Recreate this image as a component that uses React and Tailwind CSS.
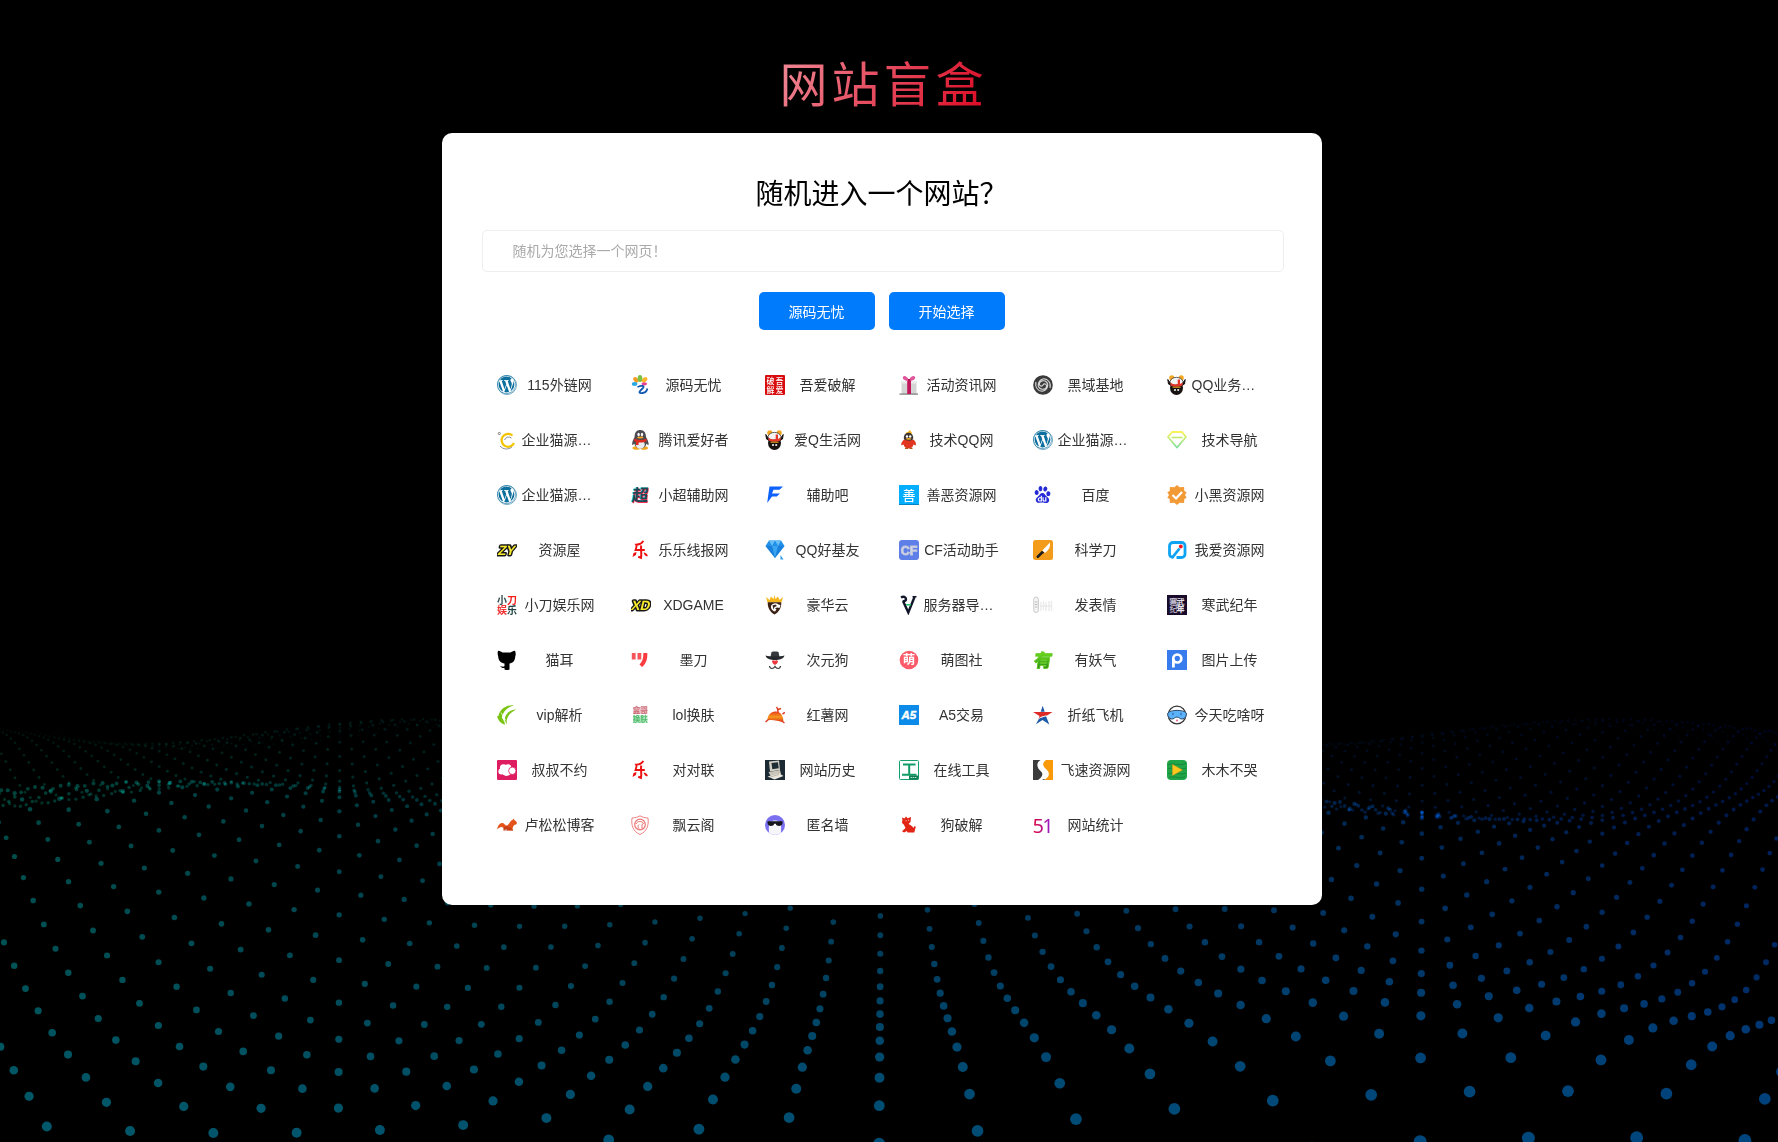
import { useEffect, useRef } from "react";
import { FaWordpress } from "react-icons/fa";
import { SiBaidu } from "react-icons/si";

const FONT = "font-['Liberation_Sans','Noto_Sans_CJK_SC',sans-serif]";

/* ---------- perspective dot field, frozen at one moment ---------- */
const FIELD = { cx: 881.5, cy: 617.5, focal: 1082.5, width: 570.24, depth: 400, height: 3, step: 5, phase: 4.828 };

function DotWave() {
  const ref = useRef(null);
  useEffect(() => {
    const ctx = ref.current.getContext("2d");
    const { cx, cy, focal, width, depth, height, step, phase } = FIELD;
    ctx.clearRect(0, 0, 1778, 1142);
    ctx.globalCompositeOperation = "lighter";
    for (let x = 0; x < width; x += step) {
      for (let z = 0; z < depth; z += step) {
        const px = x - width / 2;
        const pz = z - depth / 2;
        const w = 100 - pz;
        if (w < 30) continue;
        const py = -30 + height * (Math.cos((px / width) * Math.PI * 8 + phase) + Math.sin((pz / depth) * Math.PI * 8 + phase));
        const sx = cx + (focal * px) / w;
        const sy = cy - (focal * py) / w;
        const g = Math.round((1 - x / width) * 255);
        const b = Math.round((0.5 + (x / width) * 0.5) * 255);
        ctx.fillStyle = `rgba(0,${g},${b},${z / depth})`;
        ctx.beginPath();
        ctx.arc(sx, sy, 322 / w, 0, Math.PI * 2);
        ctx.fill();
      }
    }
  }, []);
  return <canvas ref={ref} width={1778} height={1142} className="absolute inset-0 h-[1142px] w-[1778px]" />;
}

/* ---------- icons, all on a 20x20 grid ---------- */
const Svg = ({ children }) => (
  <svg viewBox="0 0 20 20" className="h-5 w-5 shrink-0 font-['Noto_Sans_CJK_SC',sans-serif]">{children}</svg>
);
const T = ({ x = 10, y = 16, s = 16, f = "#fff", w = 700, children, ...r }) => (
  <text x={x} y={y} fontSize={s} fill={f} fontWeight={w} textAnchor="middle" {...r}>{children}</text>
);

const Wordpress = () => (
  <span className="flex h-5 w-5 shrink-0 items-center justify-center rounded-full border border-[#6fa8c4]">
    <FaWordpress className="h-[19px] w-[19px] shrink-0 text-[#0d6f9e]" />
  </span>
);
const Flower = () => (
  <Svg>
    <ellipse cx="4.800" cy="4.800" rx="2.200" ry="3" fill="#f59a23" transform="rotate(-35 4.800 4.800)" />
    <ellipse cx="9" cy="3.600" rx="2.400" ry="3.500" fill="#7ac143" />
    <ellipse cx="13.600" cy="4.800" rx="2.200" ry="3.200" fill="#f7b52c" transform="rotate(45 13.600 4.800)" />
    <ellipse cx="3.600" cy="9" rx="2.800" ry="1.900" fill="#29a9e1" />
    <ellipse cx="13.300" cy="8.800" rx="2.800" ry="1.600" fill="#e84393" />
    <path d="M6.500 12c4-2 8-1.200 5 1.500s-5 5 0 4.500 4-3 5-4.500" fill="none" stroke="#1459b0" strokeWidth="1.800" />
  </Svg>
);
const Seal = () => (
  <Svg>
    <rect width="20" height="20" rx="1" fill="#d80c0c" />
    <T x={5.4} y={8.800} s={8} w={500}>破</T><T x={14.600} y={8.800} s={8} w={500}>吾</T>
    <T x={5.4} y={17.800} s={8} w={500}>解</T><T x={14.600} y={17.800} s={8} w={500}>爱</T>
  </Svg>
);
const Gift = () => (
  <Svg>
    <path d="M2.500 7h15v12h-15z" fill="#d4d4d4" /><path d="M2 6h16v2.500H2z" fill="#ececec" />
    <path d="M.5 18.500h18.500v1.200H.5z" fill="#777" />
    <path d="M8.200 5h3.800v14H8.200z" fill="#c2185b" />
    <path d="M10 6C6 6 3 4 4 2S8 1.500 10 5c1.500-3.500 5-5 6-3S14 6 10 6z" fill="#e0559b" />
    <path d="M9 4h2.200v2.200H9z" fill="#b3134f" />
  </Svg>
);
const Swirl = () => (
  <Svg>
    <circle cx="10" cy="10" r="9.800" fill="#3a3a3a" />
    <path d="M10 10c1-2 4-1 3.500 1.500S9 15.500 6.500 13 5.500 5 10 4s8.500 4 7 9M10 10c-1 2-4 1-3.500-1.500S11 4.500 13.500 7s1 8-3.500 9-8.500-4-7-9" fill="none" stroke="#d8d8d8" strokeWidth="1.100" />
  </Svg>
);
const Panda = () => (
  <Svg>
    <circle cx="4.800" cy="2.800" r="2.600" fill="#f5a623" /><circle cx="14.200" cy="2.800" r="2.600" fill="#f5a623" />
    <ellipse cx="9.500" cy="13" rx="6.500" ry="7" fill="#17110f" />
    <path d="M.8 4.500L5 11l-3.500-2zM18.200 4.500L14 11l3.500-2z" fill="#17110f" stroke="#17110f" />
    <path d="M3 6.500C4.500 1 14.500 1 16 6.500l-1 3.500H4z" fill="#f3f3f3" stroke="#222" strokeWidth=".7" />
    <path d="M3.200 7.500c3 2 5 2.300 7.500 1.500V4.500H13V9l2.800-1.500-.6 3.300c-4 1.400-7.500 1.400-11.400 0z" fill="#e4352b" />
    <circle cx="8" cy="15" r="1.100" fill="#eee" /><circle cx="11.200" cy="15" r="1.100" fill="#eee" />
    <path d="M5.500 12.200h8" stroke="#f2b01e" strokeWidth="1" />
  </Svg>
);
const Crescent = () => (
  <Svg>
    <path d="M15.500 5.500A6.500 6.500 0 1 0 17 13" fill="none" stroke="#f5c400" strokeWidth="2.200" />
    <path d="M14.500 8a4.500 4.500 0 0 0-7 2M3 16c3 3.500 8 4 12 1" fill="none" stroke="#8b8f99" strokeWidth="1" />
    <circle cx="2.300" cy="3.500" r="1.100" fill="none" stroke="#666" strokeWidth=".8" />
  </Svg>
);
const Penguin = () => (
  <Svg>
    <ellipse cx="5.500" cy="18" rx="4" ry="1.800" fill="#f3a51c" /><ellipse cx="13" cy="18" rx="4" ry="1.800" fill="#f3a51c" />
    <path d="M9.300 0c4 0 5.700 3 5.700 7 1.500 3 3 5 2.500 8-.8 0-1.500-.8-2-1.500-.5 3-3 5-6.200 5s-5.500-2-6-5c-.6.8-1.300 1.500-2 1.500C.8 12 2.200 10 3.600 7c0-4 1.700-7 5.700-7z" fill="#4a4a50" />
    <ellipse cx="9.300" cy="14.500" rx="4.500" ry="4.300" fill="#e9edf0" />
    <ellipse cx="7.600" cy="4.600" rx="1.200" ry="1.800" fill="#fff" /><ellipse cx="11" cy="4.600" rx="1.200" ry="1.800" fill="#fff" />
    <ellipse cx="9.300" cy="7.500" rx="3.200" ry="1" fill="#f5a623" />
    <path d="M3.500 8.500c4 2 8 2 11.700 0l.6 2.500c-4 2-9 2-12.800 0zM5 11h2.600v4H5z" fill="#dc2a20" />
  </Svg>
);
const FirePenguin = () => (
  <Svg>
    <path d="M6.500 4c0-1.500 1.500-2 3-2.500L11 0l2 3-1 2z" fill="#f8b31c" />
    <ellipse cx="9.500" cy="7.500" rx="4.700" ry="4.700" fill="#3a3434" />
    <path d="M5 9.500c3 1.500 7 1.500 9.500 0 2 2 3 4 2.200 6l-2.200-1c-.5 2.500-2.500 4-4.900 4s-4.600-1.500-5-4l-2.200 1C1.800 13.500 3 11.500 5 9.500z" fill="#e2351f" />
    <circle cx="8" cy="6.500" r="1.200" fill="#fff" /><circle cx="11.200" cy="6.500" r="1.200" fill="#fff" />
    <ellipse cx="9.600" cy="8.800" rx="2.700" ry=".9" fill="#f5b023" />
    <path d="M6 18.300h3M10.500 18.300h3" stroke="#b5561c" strokeWidth="1.200" />
  </Svg>
);
const GemOutline = () => (
  <Svg>
    <defs><linearGradient id="gem" x2="0" y2="1"><stop stopColor="#fbf25a" /><stop offset="1" stopColor="#7fe0a0" /></linearGradient></defs>
    <path d="M5 2h10l4 5-9 10.500L1 7z" fill="none" stroke="url(#gem)" strokeWidth="1.900" strokeLinejoin="round" />
    <path d="M4.500 7.500h11" stroke="#c3ea6c" strokeWidth="1.600" />
  </Svg>
);
const Chao = () => (
  <Svg>
    <g transform="skewX(-6) translate(.5 0)">
      <T y={15.800} s={16.500} f="#2be0dc" x={9.200}>超</T><T y={16.600} s={16.500} f="#fa2b56" x={10.600}>超</T><T y={16.200} s={16.500} f="#1c4956" x={9.900}>超</T>
    </g>
  </Svg>
);
const Bolt = () => (
  <Svg>
    <path d="M4.500 1.500H18l-3.500 3.300H8.500L7 8.500h8l-3.200 3H7L2.200 18l1-7.500z" fill="#0d62fe" />
  </Svg>
);
const Shan = () => (
  <Svg><rect width="20" height="20" fill="#04aeff" /><path d="M0 19h20v1H0z" fill="#0583c4" /><T y={14.800} s={13} w={500}>善</T></Svg>
);
const Baidu = () => (
  <span className="flex h-5 w-5 shrink-0 items-center justify-center"><SiBaidu className="h-[17px] w-[17px] text-[#2529d8]" /></span>
);
const Badge = () => (
  <Svg>
    <path d="M10 0l2.600 2.200 4.500-.3.200 4 2.400 1.400L18 10l1.700 2.700-2.400 1.400-.2 4-4.500-.3L10 20l-2.600-2.200-4.500.3-.2-4L.3 12.700 2 10 .3 7.300l2.400-1.400.2-4 4.500.3z" fill="#f29a35" />
    <path d="M5.500 10l3.500 3.500L15 7" fill="none" stroke="#fff" strokeWidth="2.200" />
  </Svg>
);
const Slanted = ({ text }) => (
  <Svg>
    <g transform="skewX(-14) translate(2.500 0)" fontFamily="Liberation Sans">
      <T y={15} s={13.500} f="#f7ea2c" stroke="#171717" strokeWidth="3" paintOrder="stroke" strokeLinejoin="round">{text}</T>
    </g>
  </Svg>
);
const Le = () => (
  <Svg>
    <path d="M12.300.8C11 3.500 8 4.500 5.200 4.600c1 1.500-.2 3.400-.7 5.400h9.300" fill="none" stroke="#ee1111" strokeWidth="1.900" />
    <path d="M10.200 5.500c-.6 4 .6 8-.2 12.300l-2.800-1" fill="none" stroke="#ee1111" strokeWidth="2" />
    <path d="M5.500 12l-.5 3-3.500 2 1-4zM12.500 12.500c2 0 4 1.500 4.300 3.500-2 .8-3.300-1-4.300-3.500z" fill="#ee1111" />
  </Svg>
);
const Diamond = () => (
  <Svg>
    <path d="M4 .5h12l3.500 5.500L10 18 .5 6z" fill="#1f8fe8" /><path d="M4 .5L7 6l3-5.500L13 6l3-5.500z" fill="#67bdf5" />
    <path d="M.5 6h19L10 18z" fill="#1674d4" opacity=".6" /><path d="M7 6h6l-3 12z" fill="#3aa5f0" />
    <path d="M15.500 15l3 4.500h-3z" fill="#2b9ae9" />
  </Svg>
);
const Cf = () => (
  <Svg><rect width="20" height="20" rx="3" fill="#5f7fe8" /><g fontFamily="Liberation Sans"><T y={14.500} s={12.500} f="#d3d6e6" stroke="#c3c8de" strokeWidth=".9">CF</T></g></Svg>
);
const Knife = () => (
  <Svg>
    <rect width="20" height="20" rx="2.500" fill="#f39c1c" />
    <path d="M17 2.500c.5 4.500-1 7-5 10.500L9.300 10.500z" fill="#fff" /><path d="M9 10.800l2.400 2-2 1.200-3.700 3.800c-1.200.8-2.800-.3-2-1.800z" fill="#1e1e1e" />
  </Svg>
);
const Love = () => (
  <Svg>
    <path d="M8 2.500H6A3.500 3.500 0 0 0 2.500 6v8A3.500 3.500 0 0 0 5.500 17.300L12.500 8.500M8 2.500h6.500A3.500 3.500 0 0 1 18 6v8a3.500 3.500 0 0 1-3.500 3.500H9.500" fill="none" stroke="#0fa4f3" strokeWidth="2.800" />
    <circle cx="13.800" cy="6.500" r="1.900" fill="#f3121d" />
  </Svg>
);
const Xiaodao = () => (
  <Svg>
    <T x={5} y={8.800} s={10} f="#2f4a4a">小</T><T x={15} y={8.800} s={10} f="#f02222">刀</T>
    <T x={5} y={18.800} s={10} f="#f03434">娱</T><T x={15} y={18.800} s={10} f="#1f4141">乐</T>
  </Svg>
);
const Lion = () => (
  <Svg>
    <path d="M1 2l3.500 3L6 1.500 8.500 4 9.500 0l1 4L13 1.500 14.500 5 18 2l-1.500 5.500h-14z" fill="#f5b51d" />
    <path d="M2.800 7.200h13.400c.5 5-2 9.500-6.700 12.300-4.700-2.800-7.200-7.300-6.700-12.300z" fill="#3b2014" />
    <path d="M6 11c1.500-3 5-3.500 7.500-1.500l2 .5-1 3-2.500-.5-2 1 1.500 1-1.500 2c-2.500-.5-4.500-3-4-5.500z" fill="#fff" />
    <path d="M7.500 10.500l3-1 1.500 1.500-2.500 1-1 2.500z" fill="#3b2014" />
  </Svg>
);
const Vee = () => (
  <Svg>
    <path d="M2 2.500c2.500-1.500 4.800-.5 5 1.500s-2 2.500-2.500 1M4 6l5.300 11.500L15.500 2" fill="none" stroke="#11162a" strokeWidth="2.400" />
    <path d="M7 9.800h5" stroke="#1fc96b" strokeWidth="1.500" /><path d="M13.500 1.700h4" stroke="#11162a" strokeWidth="1.500" />
  </Svg>
);
const Face = () => (
  <Svg>
    <rect x=".8" y="2" width="4.600" height="15.500" rx="2.300" fill="#f5f5f5" stroke="#c9c9c9" />
    <path d="M2 7h2.400M2 9.500h2.400M2 12h2.400" stroke="#aaa" strokeWidth=".8" />
    <path d="M8 7v9M10.500 6v9M13 7v9M16 6v10M18.500 6v10M7 11h12" stroke="#eaeaea" strokeWidth="1.300" />
  </Svg>
);
const Hanwu = () => (
  <Svg>
    <rect width="20" height="20" fill="#190c2b" />
    <T x={6.500} y={9.500} s={8} f="#b9b3c4">寒</T><T x={13.500} y={9.500} s={8} f="#e3e0e8">武</T>
    <T x={6.500} y={17} s={8} f="#b3acbf">纪</T><T x={13.500} y={17} s={8} f="#f2f0f5">年</T>
    <path d="M2.500 3h7v6h-7zM11 11h6v6h-6z" fill="#d5d0de" opacity=".35" />
  </Svg>
);
const Cat = () => (
  <Svg>
    <path d="M1 .8c2 .2 3.500 1 4.500 1.800h8C14.500 1.800 16 1 18 .8c1 2.500.8 4 .3 5.500C18 11 16 13 12.500 13.500v6c-1 .8-4 .8-5 0V18C5 18.500 4 17 3 16c2 .2 2.500 1.200 4.500.3v-2.800C4 13 1.500 11 1.200 6.500.6 4.500.4 3 1 .8z" fill="#000" />
  </Svg>
);
const Modao = () => (
  <Svg>
    <path d="M.8 3h3.800v6.500H.8zM6.500 3h3.800v6.500H6.500z" fill="#f5555a" /><path d="M12.300 3h4c.3 6-1 10.500-5.300 14l-2.500-2.500c3-3 3.800-6 3.800-11.500z" fill="#fa3c40" />
  </Svg>
);
const Hat = () => (
  <Svg>
    <path d="M5.500 7L6.500 2c2-.6 5-.6 7 0l1 5z" fill="#35383d" />
    <path d="M.5 5.500c5 1.300 14 1.300 19 0-1 3.500-5 4.500-9.500 4.500S1.500 9 .5 5.500z" fill="#25282c" />
    <path d="M7 11c1-1.200 2.300-.8 3 0 .7-.8 2-1.200 3 0 0 2-1.500 3-3 4-1.500-1-3-2-3-4z" fill="#ec3940" />
    <path d="M4.500 16c.5 3.500 4 3 5.500.5 1.500 2.500 5 3 5.500-.5" fill="none" stroke="#333" strokeWidth="1.200" />
  </Svg>
);
const Moe = () => (
  <Svg><circle cx="10" cy="10" r="9.300" fill="#fb5a69" /><T y={14.400} s={12.500}>萌</T></Svg>
);
const You = () => (
  <Svg>
    <defs><linearGradient id="you" x2="0" y2="1"><stop stopColor="#7fe81c" /><stop offset=".45" stopColor="#5cc81c" /><stop offset="1" stopColor="#1f7d1a" /></linearGradient></defs>
    <g transform="skewX(-8) translate(1.500 0)"><T y={16.500} s={18} w={900} f="url(#you)" stroke="#5fc81c" strokeWidth=".7">有</T></g>
  </Svg>
);
const Pp = () => (
  <Svg>
    <rect width="20" height="20" fill="#377bed" />
    <path d="M5 17.500V9h2.800v8.500z" fill="#fff" />
    <circle cx="10.300" cy="8.500" r="4" fill="none" stroke="#fff" strokeWidth="2.700" />
  </Svg>
);
const Leaf = () => (
  <Svg>
    <path d="M17 .3C10-.3 4 3 1.500 10L5 17.500C4 10 7 3.500 17 .3z" fill="#79c411" />
    <path d="M19.500 4.500C13 4.500 7.500 9 7.800 15.500L10 19.800C8.500 13 12.500 7.500 19.500 4.500z" fill="#79c411" />
    <path d="M0 11.500l2.800-1.500c2.500 3 4.500 6 5.400 9.700C4.500 19 1.500 16 0 11.500z" fill="#79c411" />
    <path d="M4 7.500c1.500 3 3 5.500 5 8" fill="none" stroke="#fff" strokeWidth=".7" />
  </Svg>
);
const FourBlock = () => (
  <Svg>
    <path d="M2 2h14.500v7H2z" fill="#e08a94" opacity=".5" /><path d="M2 10.500h14.500V18H2z" fill="#6fd48a" opacity=".5" />
    <g opacity=".85"><T x={5.600} y={8.300} s={7.500} f="#c4606b">盒</T><T x={13} y={8.300} s={7.500} f="#c4606b">哥</T>
    <T x={5.600} y={17} s={7.500} f="#3fb25e">换</T><T x={13} y={17} s={7.500} f="#3fb25e">肤</T></g>
  </Svg>
);
const Yam = () => (
  <Svg>
    <defs><linearGradient id="yam" x2="0" y2="1"><stop stopColor="#e93a1d" /><stop offset=".5" stopColor="#f59b1c" /><stop offset="1" stopColor="#d9251a" /></linearGradient></defs>
    <path d="M2.500 15C2.500 9 7 6.500 11 6.500c4.500 0 7.500 4 7.500 11C13 15.500 8 15 2.500 15z" fill="url(#yam)" />
    <path d="M13 7c0-2 0-3.500-1.500-5M13 4.500l3-1M.5 17l3-2.500M17.500 9L20 7.500M18 17l1.500 1" fill="none" stroke="#dc3a22" strokeWidth="1.500" />
  </Svg>
);
const A5 = () => (
  <Svg><rect width="20" height="20" fill="#0c8ce8" /><g fontFamily="Liberation Sans" fontStyle="italic"><T y={14} s={11.500} x={9.800} stroke="#fff" strokeWidth=".4">A5</T></g></Svg>
);
const Star = () => (
  <Svg>
    <path d="M9.700.8l2 6H7.700zM6 13.500l7-2.500 3.300 8.500-6.800-4.500L3 19.300z" fill="#1d5ba8" />
    <path d="M0 7h19.500L14 10.500c-4 .5-6 1-8.500 3.500l1-3z" fill="#dc2b27" /><path d="M5.500 13.800c2.500-2 5-2.300 8-3" fill="none" stroke="#fff" strokeWidth=".7" />
  </Svg>
);
const Goggles = () => (
  <Svg>
    <circle cx="10" cy="10" r="8.800" fill="#fff" stroke="#333" strokeWidth="1.200" />
    <path d="M.8 8c3-3.500 15.500-3.500 18.500 0 .5 3-1 5.500-3.800 6-2.500.3-3.500-2-5.500-2s-3 2.300-5.500 2C1.700 13.500.3 11 .8 8z" fill="#5db3fb" stroke="#27496b" strokeWidth="1" />
    <path d="M6 7.800v2.400M14 7.800v2.400" stroke="#2f69ad" strokeWidth="1.200" /><circle cx="10" cy="15.500" r="1.100" fill="#f06aa0" />
  </Svg>
);
const PinkCloud = () => (
  <Svg>
    <rect width="20" height="20" rx="1" fill="#de1c60" />
    <circle cx="6.500" cy="7.800" r="3.600" fill="#fff" /><circle cx="4.300" cy="11.500" r="2.900" fill="#fff" /><circle cx="9.500" cy="11" r="5" fill="#fff" /><circle cx="11" cy="7.500" r="3.200" fill="#fff" />
    <circle cx="15.300" cy="10.800" r="3.700" fill="#fff" stroke="#de1c60" strokeWidth=".8" />
  </Svg>
);
const OldPc = () => (
  <Svg>
    <rect width="20" height="20" fill="#1b2a33" /><path d="M4 1.500l10-1 1 9.500-10 1.500z" fill="#d3d0c5" /><path d="M6.500 3l6.500-.8.700 6-6.400 1z" fill="#1f2e36" />
    <path d="M3.500 12l11.500-2 1 4-10 3z" fill="#c9c5b8" /><path d="M2.500 16.500l12-3 4 2.500-9 3.500z" fill="#eae6dc" /><path d="M5 17l9-2.500" stroke="#a9a69b" strokeWidth=".7" />
  </Svg>
);
const Gong = () => (
  <Svg>
    <rect x=".5" y=".5" width="19" height="19" rx="1" fill="#fff" stroke="#17a06c" />
    <path d="M4 4.500h12.500M10.200 4.500v10.200M3 14.700h14.500" stroke="#129c66" strokeWidth="2" />
    <rect x="10" y="15.500" width="9.500" height="4" fill="#0f7d53" /><path d="M11.500 17.500h6.500" stroke="#b6e3cf" strokeWidth="1.200" strokeDasharray="1.500 .6" />
  </Svg>
);
const Fei = () => (
  <Svg>
    <path d="M0 0h7.500C2.500 3 4 8 8 11.500c2.800 2.500 1 6-3 8.500H0z" fill="#3b3b3b" /><path d="M20 0v20h-9c6-3 6-7.500 2.500-10.500S8.500 3.500 13 0z" fill="#fb9a09" />
    <path d="M12 20h-3l2-1z" fill="#3b3b3b" />
  </Svg>
);
const Play = () => (
  <Svg>
    <rect width="20" height="20" rx="4" fill="#20a548" />
    <path d="M1 5c5-3 12 2 18-2M1 9c6-3 12 2 18-1M1 14c5-3 12 2 18-1M2 17.500c5-2 12 2 16-1" fill="none" stroke="#158339" strokeWidth=".9" />
    <path d="M5.500 4.500L15.500 10l-10 5.500z" fill="#fcc81c" stroke="#dc961a" strokeWidth=".5" />
  </Svg>
);
const Squirrel = () => (
  <Svg>
    <path d="M0 14.500C1 10 3 7.500 5.500 8 8 8.500 8 11 10 10.500c2.500-1 3-5 5.500-5.500l1-1.500 1 1.700C20 6 20.500 8.500 19 9.500c-2 0-2.500 1-3.500 4l.8 2H9.500l1-1.500-2.500.3L7 16c0-2.500-1-4-2.500-4S1.500 13 0 14.500z" fill="#e4541a" />
    <path d="M6 15.500L7 12l3-1 5 2.500.8 2z" fill="#b53412" opacity=".6" />
  </Svg>
);
const Shield = () => (
  <Svg>
    <path d="M9 .8c2.500 1.500 5 2 8 2.200C18 10 16 16.500 9 19.500 2 16.500 0 10 1 3 4 2.800 6.500 2.300 9 .8z" fill="#fff" stroke="#f08080" strokeWidth="1" />
    <circle cx="9" cy="9.500" r="5.300" fill="none" stroke="#ee7575" strokeWidth="1.200" />
    <path d="M5 9c1-3 6-3.500 7.500-.5L11 9.500v4M8 9.500c-1.500 1-1 3 0 4" fill="none" stroke="#ee6b6b" strokeWidth="1" />
  </Svg>
);
const Shades = () => (
  <Svg>
    <defs><clipPath id="shades"><circle cx="10" cy="10" r="10" /></clipPath></defs>
    <g clipPath="url(#shades)">
      <rect width="20" height="20" fill="#7a70f0" /><path d="M3.500 20c1-3 0-4 .5-10C4.500 4 15.500 4 16 10s-.5 7 .5 10z" fill="#f6f6fa" />
      <path d="M2.500 6.300h15v2c-.5 3.500-6 3.500-6.800.5H9.300C8.500 11.800 3 11.800 2.500 8.300z" fill="#16161d" />
    </g>
  </Svg>
);
const Dog = () => (
  <Svg>
    <path d="M3 2.500l2.500 1L7 1.500l1.500 1.800L12 2l-.5 5L9.500 9c2 1 4 2 5 4l1-2 1.300.8-1.500 5.700H9.500c-1 0-1.500-.5-1.500-1.500L5 17.500l-2-1.200L6.500 13 4.800 9.500C3 8.500 2.500 7 3.500 5.500z" fill="#e22414" />
    <path d="M6.500 5.800h1M9 5.200h1" stroke="#fff" strokeWidth=".8" />
  </Svg>
);
const FiftyOne = () => (
  <Svg>
    <defs><linearGradient id="f51" gradientUnits="userSpaceOnUse" x2="20"><stop stopColor="#e0083c" /><stop offset="1" stopColor="#8a1fe0" /></linearGradient></defs>
    <g fontFamily="Noto Sans"><text x="-.4" y="17.500" fontSize="20" fill="url(#f51)" textLength="21">51</text></g>
  </Svg>
);

const Zy = () => <Slanted text="ZY" />;
const Xd = () => <Slanted text="XD" />;

const SITES = [
  [Wordpress, "115外链网"], [Flower, "源码无忧"], [Seal, "吾爱破解"], [Gift, "活动资讯网"], [Swirl, "黑域基地"], [Panda, "QQ业务…", true],
  [Crescent, "企业猫源…", true], [Penguin, "腾讯爱好者"], [Panda, "爱Q生活网"], [FirePenguin, "技术QQ网"], [Wordpress, "企业猫源…", true], [GemOutline, "技术导航"],
  [Wordpress, "企业猫源…", true], [Chao, "小超辅助网"], [Bolt, "辅助吧"], [Shan, "善恶资源网"], [Baidu, "百度"], [Badge, "小黑资源网"],
  [Zy, "资源屋"], [Le, "乐乐线报网"], [Diamond, "QQ好基友"], [Cf, "CF活动助手"], [Knife, "科学刀"], [Love, "我爱资源网"],
  [Xiaodao, "小刀娱乐网"], [Xd, "XDGAME"], [Lion, "豪华云"], [Vee, "服务器导…", true], [Face, "发表情"], [Hanwu, "寒武纪年"],
  [Cat, "猫耳"], [Modao, "墨刀"], [Hat, "次元狗"], [Moe, "萌图社"], [You, "有妖气"], [Pp, "图片上传"],
  [Leaf, "vip解析"], [FourBlock, "lol换肤"], [Yam, "红薯网"], [A5, "A5交易"], [Star, "折纸飞机"], [Goggles, "今天吃啥呀"],
  [PinkCloud, "叔叔不约"], [Le, "对对联"], [OldPc, "网站历史"], [Gong, "在线工具"], [Fei, "飞速资源网"], [Play, "木木不哭"],
  [Squirrel, "卢松松博客"], [Shield, "飘云阁"], [Shades, "匿名墙"], [Dog, "狗破解"], [FiftyOne, "网站统计"],
];

function Site({ icon: Icon, name, clipped }) {
  return (
    <a className="flex h-[55px] items-center gap-[5px]">
      <Icon />
      <span className={`w-[76px] whitespace-nowrap text-sm leading-5 text-[#333] ${clipped ? "text-left" : "text-center"}`}>{name}</span>
    </a>
  );
}

export default function App() {
  return (
    <div className={`relative h-[1142px] w-[1778px] overflow-hidden bg-black ${FONT}`}>
      <DotWave />
      <main className="relative flex w-[1763px] flex-col items-center pt-[51px]">
        <h1 className="ml-1 h-[82px] bg-[linear-gradient(120deg,#f08c98,#d9001b)] bg-clip-text text-[48px] leading-[70px] font-normal tracking-[4px] text-transparent">
          网站盲盒
        </h1>
        <section className="flex h-[772px] w-[880px] flex-col items-center rounded-[10px] bg-white px-10 pt-[41px]">
          <h2 className="h-14 text-[28px] leading-[42px] text-black">随机进入一个网站？</h2>
          <div className="ml-[2px] flex h-[42px] w-[802px] shrink-0 items-center rounded-[5px] border border-[#eee] px-[30px] text-sm text-[#aaa]">
            随机为您选择一个网页！
          </div>
          <div className="mt-5 flex gap-[14px]">
            <button className="h-[38px] w-[116px] rounded-[5px] bg-[#007bfb] pt-px text-sm text-white">源码无忧</button>
            <button className="h-[38px] w-[116px] rounded-[5px] bg-[#007bfb] pt-px text-sm text-white">开始选择</button>
          </div>
          <div className="mt-[27px] grid w-full grid-cols-[repeat(6,134px)] pl-[15px]">
            {SITES.map(([icon, name, clipped], i) => (
              <Site key={i} icon={icon} name={name} clipped={clipped} />
            ))}
          </div>
        </section>
      </main>
    </div>
  );
}
